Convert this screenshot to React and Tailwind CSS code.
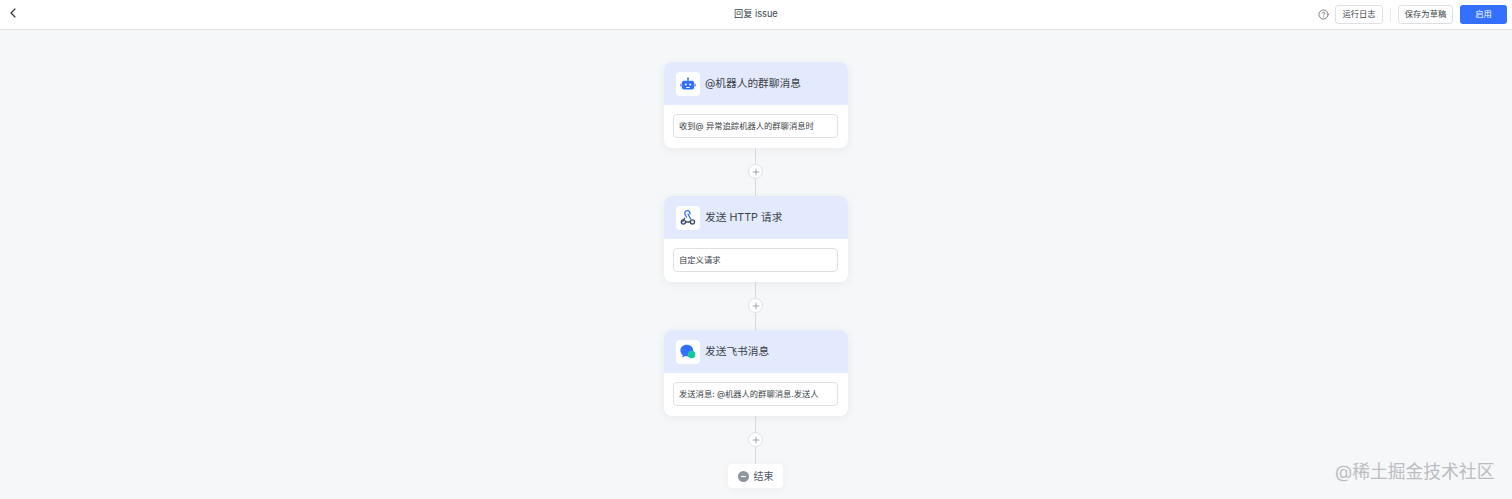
import React from 'react';
import { ChevronLeft, CircleHelp, Plus } from 'lucide-react';

const font = "font-['Inter','Noto_Sans_CJK_SC',sans-serif]";

function RobotIcon() {
  return (
    <svg width="16" height="16" viewBox="0 0 16 16">
      <rect x="7.4" y="2.200" width="1.200" height="3" fill="#3370ff" />
      <circle cx="8" cy="2.400" r="0.900" fill="#3370ff" />
      <rect x="2" y="4.800" width="12" height="8.800" rx="1.800" fill="#3370ff" />
      <rect x="0.400" y="7.500" width="1.200" height="3.200" rx="0.600" fill="#3370ff" />
      <rect x="14.400" y="7.500" width="1.200" height="3.200" rx="0.600" fill="#3370ff" />
      <circle cx="5.800" cy="8.400" r="1" fill="#fff" />
      <circle cx="10.200" cy="8.400" r="1" fill="#fff" />
      <rect x="6.200" y="11" width="3.600" height="0.900" fill="#fff" />
    </svg>
  );
}

function WebhookIcon() {
  return (
    <svg width="16" height="16" viewBox="0 0 16 16" fill="none" strokeWidth="1.300" strokeLinecap="round">
      <path d="M6.600 7.200 5.300 4.800a2.600 2.600 0 1 1 4.600-.9" stroke="#3370ff" />
      <path d="M4.600 8.300 2.700 11.500" stroke="#3b4a6b" />
      <circle cx="3.400" cy="12" r="2.100" stroke="#3b4a6b" />
      <path d="M5.800 12h5" stroke="#3b4a6b" />
      <circle cx="12.400" cy="12" r="2.100" stroke="#3b4a6b" />
      <path d="M8 4.200 10.800 9" stroke="#3370ff" />
    </svg>
  );
}

function LarkIcon() {
  return (
    <svg width="16" height="16" viewBox="0 0 16 16">
      <path d="M6.800.8C3 .8.400 3.300.400 6.500c0 1.900.8 3.500 2.300 4.600l-.3 2.300 2.800-1.300c.5.100 1.100.2 1.600.2 3.700 0 6.400-2.500 6.400-5.800S10.500.8 6.800.8z" fill="#3370ff" />
      <circle cx="11.500" cy="10.500" r="3.800" fill="#14c9a0" />
    </svg>
  );
}

function Connector() {
  return (
    <div className="flex h-12 w-[184px] flex-col items-center pr-px">
      <div className="h-4 w-px bg-[#d5d8de]" />
      <div className="flex h-[15px] w-[15px] items-center justify-center rounded-full border border-[#dee0e3] bg-white text-[#646a73]">
        <Plus size={10} strokeWidth={1.4} />
      </div>
      <div className="w-px flex-1 bg-[#d5d8de]" />
    </div>
  );
}

function FlowCard({ icon, title, text }) {
  return (
    <div className="w-[184px] overflow-hidden rounded-lg bg-white shadow-[0_2px_10px_rgba(31,35,41,0.06)]">
      <div className="flex h-[43px] items-center gap-[5px] bg-[#e3eafd] pl-3 pt-px">
        <div className="flex h-6 w-6 items-center justify-center rounded-[4px] bg-white">{icon}</div>
        <span className="text-[10.700px] leading-none text-[#3a3f47]">{title}</span>
      </div>
      <div className="px-[9px] pb-[10px] pt-[9px]">
        <div className="flex h-6 w-[165px] items-center rounded-[4px] border border-[#dee0e3] bg-white pl-[5px] pt-px text-[8.300px] text-[#3a3f47]">
          {text}
        </div>
      </div>
    </div>
  );
}

export default function App() {
  return (
    <div className={`relative flex h-[499px] flex-col overflow-hidden bg-[#f5f7f9] ${font}`}>
      <header className="relative flex h-[30px] shrink-0 items-center justify-end border-b border-[#e3e4e6] bg-white pr-[5px]">
        <ChevronLeft size={16} strokeWidth={1.700} className="absolute left-[5px] top-[5px] text-[#2b2f36]" />
        <span className="absolute left-[734px] top-[6px] pt-px text-[9.200px] leading-[14px] text-[#3a3f47]">回复 issue</span>
        <CircleHelp size={11} strokeWidth={1.400} className="mr-[6px] text-[#3a3f47]" />
        <button className="h-[19px] w-[48px] rounded-[3px] border border-[#dee0e3] bg-white text-[8.300px] text-[#3a3f47]">运行日志</button>
        <div className="mx-[7px] h-[14px] w-px bg-[#e8e9eb]" />
        <button className="h-[19px] w-[55px] rounded-[3px] border border-[#dee0e3] bg-white text-[8.300px] text-[#3a3f47]">保存为草稿</button>
        <button className="ml-[7px] h-[19px] w-[47px] rounded-[3px] bg-[#3370ff] text-[8.300px] text-white">启用</button>
      </header>

      <main className="flex flex-col items-center pt-8">
        <FlowCard icon={<RobotIcon />} title="@机器人的群聊消息" text="收到@ 异常追踪机器人的群聊消息时" />
        <Connector />
        <FlowCard icon={<WebhookIcon />} title="发送 HTTP 请求" text="自定义请求" />
        <Connector />
        <FlowCard icon={<LarkIcon />} title="发送飞书消息" text="发送消息: @机器人的群聊消息.发送人" />
        <Connector />
        <div className="mr-px flex h-6 w-[55px] items-center justify-center gap-[5px] rounded-[4px] bg-white text-[10px] text-[#4e5969] shadow-[0_2px_8px_rgba(31,35,41,0.04)]">
          <span className="flex h-[11px] w-[11px] items-center justify-center rounded-full bg-[#8f959e]">
            <span className="h-px w-[5px] bg-white" />
          </span>
          结束
        </div>
      </main>

      <div className="absolute left-[1335px] top-[460px] text-[17.800px] leading-[24px] text-[#bbbdc1]">@稀土掘金技术社区</div>
    </div>
  );
}
